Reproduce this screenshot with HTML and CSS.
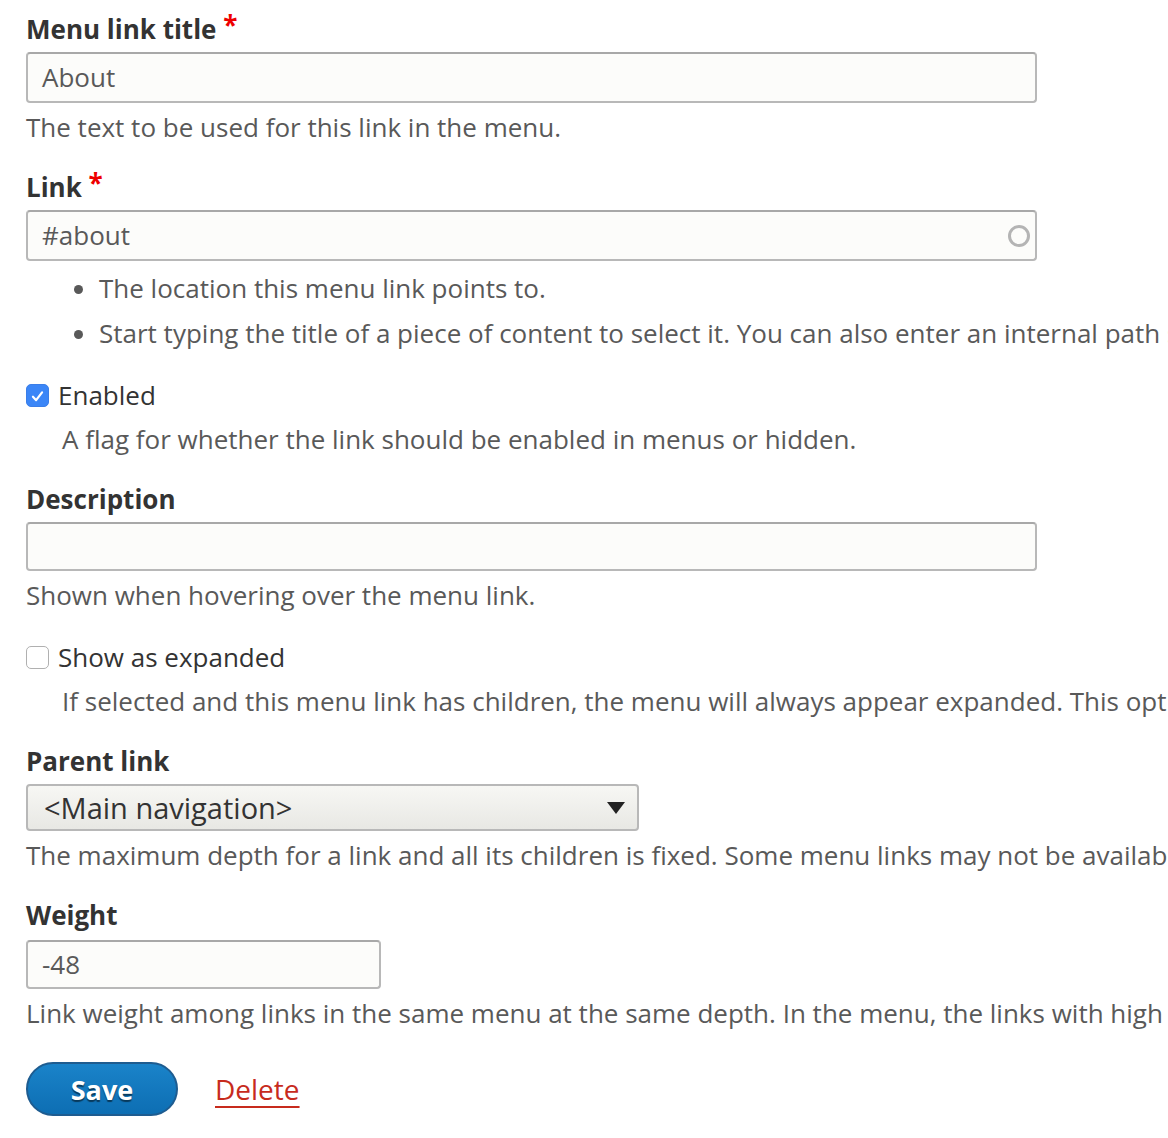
FILE: index.html
```html
<!DOCTYPE html>
<html lang="en">
<head>
<meta charset="utf-8">
<title>Edit menu link</title>
<link rel="stylesheet" href="styles.css">
</head>
<body>
<form class="form">
  <div class="item">
    <label class="label">Menu link title <span class="req">*</span></label>
    <div class="input">About</div>
    <div class="desc">The text to be used for this link in the menu.</div>
  </div>

  <div class="item">
    <label class="label">Link <span class="req">*</span></label>
    <div class="input input--auto">#about
      <svg class="throbber" width="26" height="26" viewBox="0 0 26 26"><circle cx="13" cy="13" r="9.5" fill="none" stroke="#b4b4b4" stroke-width="3"/></svg>
    </div>
    <ul class="list">
      <li>The location this menu link points to.</li>
      <li>Start typing the title of a piece of content to select it. You can also enter an internal path such as /node/add or an external URL such as http://example.com. Enter &lt;front&gt; to link to the front page.</li>
    </ul>
  </div>

  <div class="item item--check">
    <div class="check-row">
      <span class="box box--on"><svg width="23" height="23" viewBox="0 0 23 23"><path d="M6.5 11.8 L10 15.5 L16.5 7" fill="none" stroke="#fff" stroke-width="2.4" stroke-linecap="round" stroke-linejoin="round"/></svg></span>
      <span class="check-label">Enabled</span>
    </div>
    <div class="desc desc--indent">A flag for whether the link should be enabled in menus or hidden.</div>
  </div>

  <div class="item">
    <label class="label">Description</label>
    <div class="input input--short"></div>
    <div class="desc">Shown when hovering over the menu link.</div>
  </div>

  <div class="item item--check">
    <div class="check-row">
      <span class="box"></span>
      <span class="check-label">Show as expanded</span>
    </div>
    <div class="desc desc--indent">If selected and this menu link has children, the menu will always appear expanded. This option may be overridden for the entire menu tree when placing a menu block.</div>
  </div>

  <div class="item">
    <label class="label">Parent link</label>
    <div class="select">&lt;Main navigation&gt;<span class="arrow"></span></div>
    <div class="desc">The maximum depth for a link and all its children is fixed. Some menu links may not be available as parents if selecting them would exceed this limit.</div>
  </div>

  <div class="item">
    <label class="label">Weight</label>
    <div class="input input--weight">-48</div>
    <div class="desc">Link weight among links in the same menu at the same depth. In the menu, the links with high weight will sink and links with a low weight will be positioned nearer the top.</div>
  </div>

  <div class="actions">
    <button type="button" class="btn">Save</button>
    <a class="delete" href="#">Delete</a>
  </div>
</form>
</body>
</html>
```
FILE: styles.css
```css
html, body {
  margin: 0;
  padding: 0;
  overflow: hidden;
  background: #fff;
}
body {
  font-family: "Open Sans", "DejaVu Sans", sans-serif;
  font-size: 26px;
  color: #333;
}
.form {
  padding: 11px 0 0 26px;
  width: 1011px;
}
.item {
  margin-bottom: 24px;
  white-space: nowrap;
}
.label {
  display: block;
  font-weight: 700;
  line-height: 36px;
  margin-bottom: 5px;
  color: #333;
}
.req {
  color: #e00;
  position: relative;
  top: -4px;
}
.input {
  box-sizing: border-box;
  height: 51px;
  width: 1011px;
  border: 2px solid #b8b8b8;
  border-top-color: #a8a8a8;
  border-radius: 4px;
  background: #fcfcfa;
  padding: 0 14px;
  line-height: 47px;
  color: #595959;
  position: relative;
}
.input--short { height: 49px; }
.input--weight { width: 355px; height: 49px; line-height: 45px; margin-top: 7px; }
.throbber {
  position: absolute;
  right: 3px;
  top: 11px;
}
.desc {
  margin-top: 6px;
  line-height: 36px;
  color: #595959;
}
.desc--indent {
  margin-top: 8px;
  padding-left: 36px;
}
.list {
  margin: 0;
  padding: 0 0 0 73px;
  color: #595959;
}
.list li {
  line-height: 36px;
  margin-top: 9px;
  padding-left: 0;
}
.list li::marker {
  font-size: 26px;
}
.item--check {
  padding-top: 2px;
}
.check-row {
  display: flex;
  align-items: center;
  height: 36px;
}
.box {
  box-sizing: border-box;
  width: 23px;
  height: 23px;
  border-radius: 5px;
  border: 1px solid #b0b0b0;
  background: #fff;
  margin-right: 9px;
  display: flex;
}
.box--on {
  background: #3b86f7;
  border-color: #3b7ee8;
}
.check-label {
  color: #333;
  line-height: 36px;
}
.select {
  box-sizing: border-box;
  width: 613px;
  height: 47px;
  border: 2px solid #b8b8b8;
  border-radius: 4px;
  background: linear-gradient(#f7f7f4, #e8e8e4);
  padding: 0 16px;
  line-height: 42px;
  color: #333;
  display: flex;
  align-items: center;
  justify-content: space-between;
  font-size: 29px;
}
.arrow {
  width: 0;
  height: 0;
  border-left: 9px solid transparent;
  border-right: 9px solid transparent;
  border-top: 12px solid #222;
  margin-right: -4px;
}
.actions {
  display: flex;
  align-items: center;
  margin-top: 31px;
}
.btn {
  box-sizing: border-box;
  width: 152px;
  height: 54px;
  border-radius: 27px;
  border: 2px solid #1e5c90;
  background: linear-gradient(#1a83c9, #0d6eb3);
  color: #fff;
  font-family: "Open Sans", "DejaVu Sans", sans-serif;
  font-size: 27px;
  font-weight: 700;
  text-shadow: 0 2px 1px rgba(0,0,0,0.5);
  padding: 0;
  margin-right: 37px;
}
.delete {
  color: #c72b1d;
  font-size: 28px;
  text-decoration: underline;
  text-decoration-thickness: 2px;
  text-underline-offset: 6px;
}
```
